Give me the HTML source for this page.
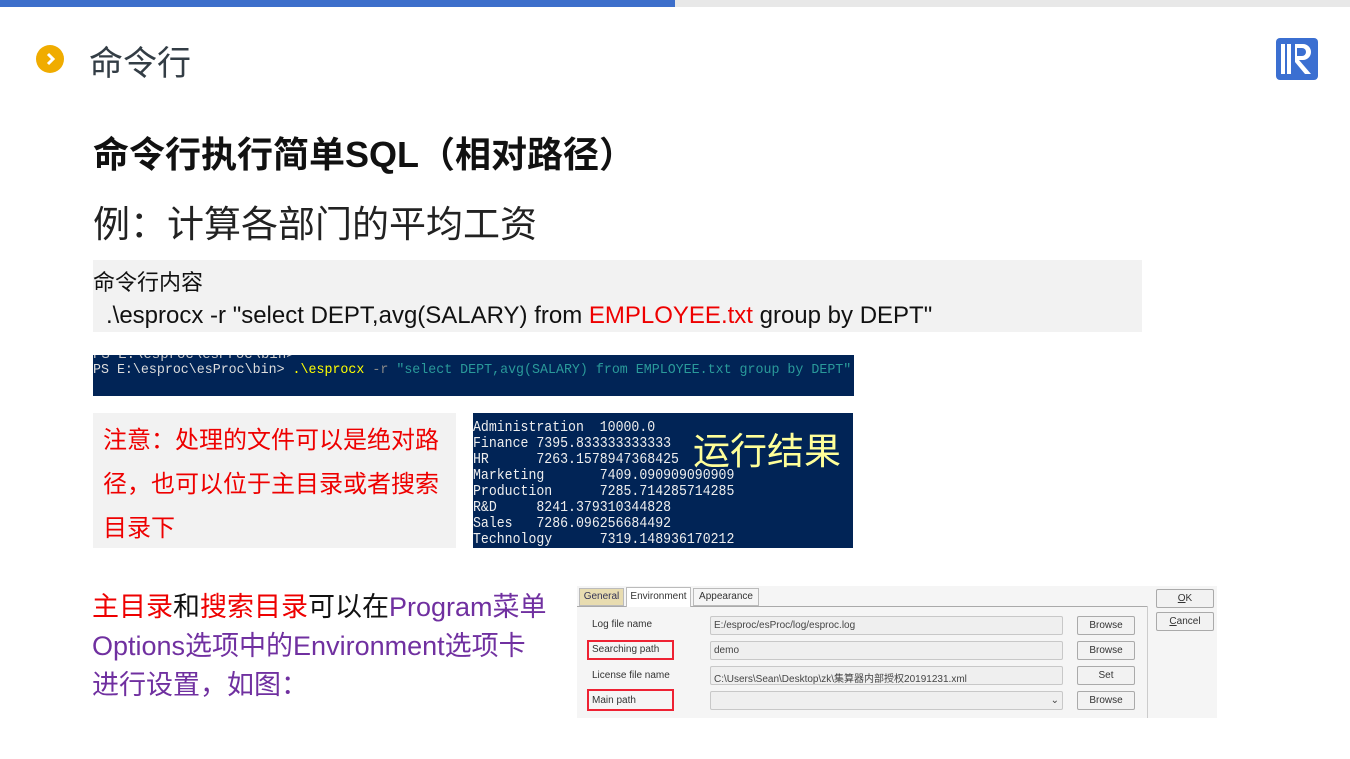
<!DOCTYPE html>
<html><head><meta charset="utf-8"><style>
*{margin:0;padding:0;box-sizing:border-box}
body{width:1350px;height:759px;background:#fff;position:relative;overflow:hidden;font-family:"Liberation Sans","Noto Sans CJK SC",sans-serif}
.a{position:absolute}
.mono{font-family:"Liberation Mono","Noto Sans CJK SC",monospace}
.dlg{font-family:"Liberation Sans",sans-serif;font-size:10px;color:#333}
.fld{position:absolute;height:19px;border:1px solid #c8c8c8;background:#efefef;border-radius:2px;padding:3px 3px;font-size:10px;color:#444}
.btn{position:absolute;height:19px;border:1px solid #aaa;background:#f2f2f2;border-radius:2px;font-size:10px;text-align:center;line-height:17px;color:#333}
</style></head><body>
<div class="a" style="left:0;top:0;width:675px;height:7px;background:#3d6fcb"></div>
<div class="a" style="left:675px;top:0;width:675px;height:7px;background:#e8e8e8"></div>
<div class="a" style="left:36px;top:45px;width:28px;height:28px;border-radius:50%;background:#f0ac00"></div>
<svg class="a" style="left:36px;top:45px" width="28" height="28"><path d="M12 9l5 5-5 5" stroke="#fff" stroke-width="3" fill="none"/></svg>
<div class="a" style="left:89px;top:36px;font-size:34px;color:#333d45">命令行</div>
<svg class="a" style="left:1276px;top:38px" width="42" height="42"><rect x="0" y="0" width="42" height="42" rx="4" fill="#3b6fd1"/><rect x="5" y="6" width="4" height="30" fill="#fff"/><rect x="11" y="6" width="4" height="30" fill="#fff"/><path d="M17 6h10a8 8 0 0 1 0 16h-4l12 14h-6l-10-12v-18z" fill="#fff"/><path d="M21 10h5a4 4 0 0 1 0 8h-5z" fill="#3b6fd1"/></svg>
<div class="a" style="left:93px;top:126px;font-size:36px;font-weight:bold;color:#111">命令行执行简单SQL（相对路径）</div>
<div class="a" style="left:93px;top:194px;font-size:37px;color:#222">例：计算各部门的平均工资</div>
<div class="a" style="left:93px;top:260px;width:1049px;height:72px;background:#f2f2f2"></div>
<div class="a" style="left:93px;top:265px;font-size:22px;color:#111">命令行内容</div>
<div class="a" style="left:106px;top:302px;font-size:24px;color:#111">.\esprocx -r "select DEPT,avg(SALARY) from <span style="color:#e00">EMPLOYEE.txt</span> group by DEPT"</div>
<div class="a" style="left:93px;top:355px;width:761px;height:41px;background:#012456;overflow:hidden">
<div class="a mono" style="left:0;top:-8px;font-size:14px;color:#ccc;white-space:nowrap">PS E:\esproc\esProc\bin&gt;</div>
<div class="a mono" style="left:0;top:7px;font-size:14px;color:#ddd;white-space:nowrap;transform:scaleX(.95);transform-origin:left">PS E:\esproc\esProc\bin&gt; <span style="color:#ff0">.\esprocx</span> <span style="color:#888">-r</span> <span style="color:#2a9a9a">"select DEPT,avg(SALARY) from EMPLOYEE.txt group by DEPT"</span></div>
</div>
<div class="a" style="left:93px;top:413px;width:363px;height:135px;background:#f2f2f2"></div>
<div class="a" style="left:103px;top:419px;width:342px;font-size:24px;line-height:44px;color:#e00">注意：处理的文件可以是绝对路径，也可以位于主目录或者搜索目录下</div>
<div class="a" style="left:473px;top:413px;width:380px;height:135px;background:#012456;overflow:hidden">
<div class="a mono" style="left:0;top:7px;font-size:15px;line-height:16px;color:#eee;white-space:pre;transform:scaleX(.88);transform-origin:left">Administration  10000.0
Finance 7395.833333333333
HR      7263.1578947368425
Marketing       7409.090909090909
Production      7285.714285714285
R&amp;D     8241.379310344828
Sales   7286.096256684492
Technology      7319.148936170212</div>
<div class="a" style="left:220px;top:8px;font-size:37px;color:#ffff99">运行结果</div>
</div>
<div class="a" style="left:92px;top:588px;width:480px;font-size:27px;line-height:39px;color:#7030a0"><span style="color:#e00">主目录</span><span style="color:#111">和</span><span style="color:#e00">搜索目录</span><span style="color:#111">可以在</span>Program菜单<br>Options选项中的Environment选项卡<br>进行设置，如图：</div>
<div class="a dlg" style="left:577px;top:586px;width:640px;height:132px;background:#f5f5f5">
<div class="a" style="left:0;top:20px;width:570px;height:1px;background:#aaa"></div>
<div class="a" style="left:570px;top:20px;width:1px;height:112px;background:#ccc"></div>
<div class="a" style="left:2px;top:2px;width:45px;height:18px;background:#e8dcb0;border:1px solid #bbb;text-align:center;line-height:16px;color:#335">General</div>
<div class="a" style="left:49px;top:1px;width:65px;height:20px;background:#fff;border:1px solid #bbb;border-bottom:none;text-align:center;line-height:18px">Environment</div>
<div class="a" style="left:116px;top:2px;width:66px;height:18px;background:#f5f5f5;border:1px solid #bbb;text-align:center;line-height:16px">Appearance</div>
<div class="a" style="left:15px;top:33px">Log file name</div>
<div class="a" style="left:10px;top:54px;width:87px;height:20px;border:2px solid #e23"></div>
<div class="a" style="left:15px;top:58px">Searching path</div>
<div class="a" style="left:15px;top:84px">License file name</div>
<div class="a" style="left:10px;top:103px;width:87px;height:22px;border:2px solid #e23"></div>
<div class="a" style="left:15px;top:109px">Main path</div>
<div class="fld" style="left:133px;top:30px;width:353px">E:/esproc/esProc/log/esproc.log</div>
<div class="fld" style="left:133px;top:55px;width:353px">demo</div>
<div class="fld" style="left:133px;top:80px;width:353px">C:\Users\Sean\Desktop\zk\集算器内部授权20191231.xml</div>
<div class="fld" style="left:133px;top:105px;width:353px;text-align:right">⌄</div>
<div class="btn" style="left:500px;top:30px;width:58px">Browse</div>
<div class="btn" style="left:500px;top:55px;width:58px">Browse</div>
<div class="btn" style="left:500px;top:80px;width:58px">Set</div>
<div class="btn" style="left:500px;top:105px;width:58px">Browse</div>
<div class="btn" style="left:579px;top:3px;width:58px"><u>O</u>K</div>
<div class="btn" style="left:579px;top:26px;width:58px"><u>C</u>ancel</div>
</div>
</body></html>
